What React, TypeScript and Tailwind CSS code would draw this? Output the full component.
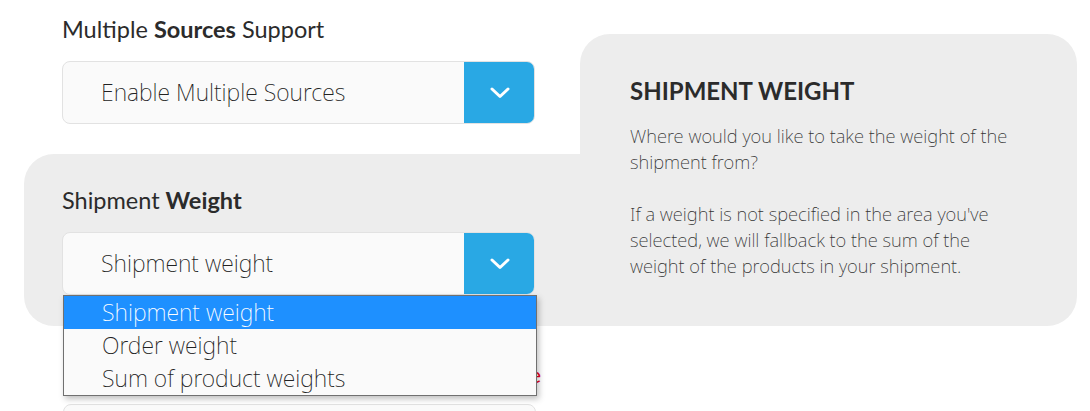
import { useState } from 'react'

const FONT = { fontFamily: 'Lato, "Open Sans", sans-serif' }
const THIN = { fontFamily: '"Noto Sans", Lato, sans-serif' }

const OPTIONS = ['Shipment weight', 'Order weight', 'Sum of product weights']

function Chevron() {
  return (
    <svg width="20" height="12" viewBox="0 0 20 12" fill="none">
      <polyline points="2,2 10,9.5 18,2" stroke="white" strokeWidth="3" strokeLinecap="round" strokeLinejoin="round" />
    </svg>
  )
}

function SelectBox({ value }: { value: string }) {
  return (
    <div className="flex h-[63px] w-[473px] overflow-hidden rounded-[8px] border border-[#e2e2e2] bg-[#fafafa]">
      <div className="flex flex-1 items-center pl-[38px] text-[23px] font-extralight text-[#222]" style={THIN}>
        {value}
      </div>
      <div className="-my-px -mr-px flex w-[71px] items-center justify-center rounded-r-[8px] bg-[#29a8e4]">
        <Chevron />
      </div>
    </div>
  )
}

export default function App() {
  const [selected] = useState(0)

  return (
    <div className="relative h-[411px] w-[1090px] overflow-hidden bg-white" style={FONT}>
      <div className="flex items-end pl-[24px]">
        <div className="flex w-[556px] flex-col">
          <div className="pl-[38px] pt-[14px]">
            <h2 className="text-[23.5px] leading-[30px] text-[#2b2b2b]">
              Multiple <span className="font-bold">Sources</span> Support
            </h2>
            <div className="mt-[17px]">
              <SelectBox value="Enable Multiple Sources" />
            </div>
          </div>
          <div className="mt-[30px] rounded-l-[30px] bg-[#ededed] pb-[31px] pl-[38px] pt-[31px]">
            <h2 className="text-[23.5px] leading-[30px] text-[#2b2b2b]">
              Shipment <span className="font-bold">Weight</span>
            </h2>
            <div className="mt-[17px]">
              <SelectBox value={OPTIONS[selected]} />
            </div>
          </div>
        </div>
        <div className="h-[292px] w-[497px] rounded-tl-[30px] rounded-r-[30px] bg-[#ededed] px-[50px] pt-[41px]">
          <h3 className="text-[24px] font-bold uppercase leading-[32px] text-[#2b2b2b]">Shipment Weight</h3>
          <div className="text-[18.4px] font-extralight leading-[26px] text-[#333]" style={THIN}>
            <p className="mt-[16px]">
              Where would you like to take the weight of the
              <br />
              shipment from?
            </p>
            <p className="mt-[26px]">
              If a weight is not specified in the area you've
              <br />
              selected, we will fallback to the sum of the
              <br />
              weight of the products in your shipment.
            </p>
          </div>
        </div>
      </div>

      <div className="pl-[63px]">
        <div className="flex w-[478px] justify-end pt-[34px] text-[22px] leading-[30px] text-[#e8001c]">
          Please select a rate type
        </div>
        <div className="mt-[14px] h-[63px] w-[473px] rounded-[8px] border border-[#e2e2e2] bg-[#fafafa]" />
      </div>

      <ul
        className="absolute left-[63px] top-[295px] w-[474px] border border-[#707070] bg-[#fafafa] shadow-[2px_3px_6px_rgba(0,0,0,0.25)]"
        style={THIN}
      >
        {OPTIONS.map((opt, i) => (
          <li
            key={opt}
            className={`flex h-[33px] items-center pl-[38px] text-[23px] font-extralight ${
              i === selected ? 'bg-[#1e90ff] text-white' : 'text-[#222]'
            }`}
          >
            {opt}
          </li>
        ))}
      </ul>
    </div>
  )
}
